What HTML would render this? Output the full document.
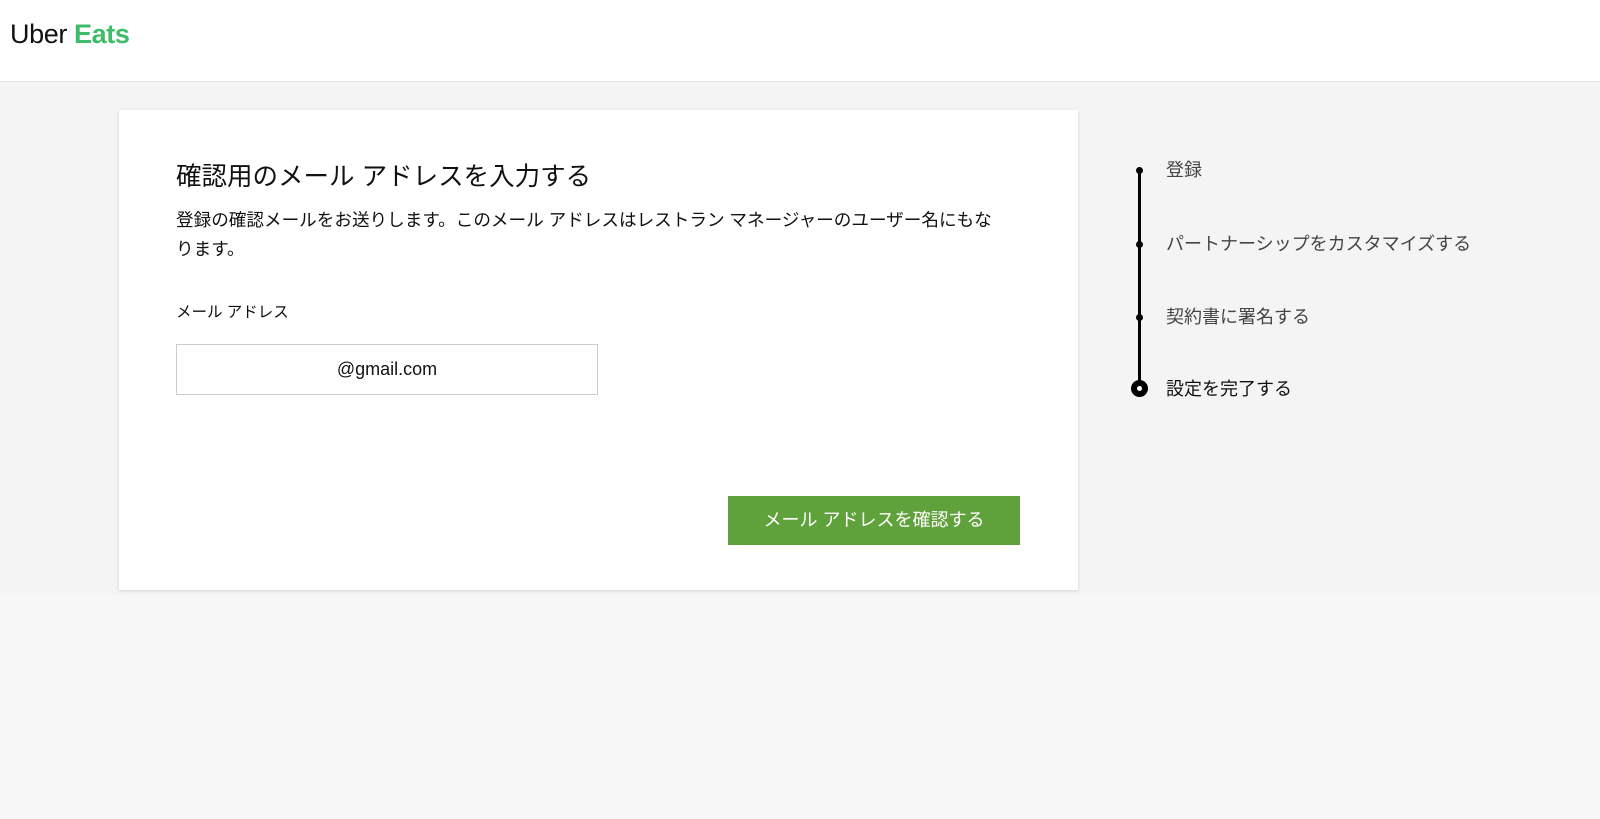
<!DOCTYPE html>
<html><head><meta charset="utf-8"><style>
*{margin:0;padding:0;box-sizing:border-box}
body{width:1600px;height:819px;background:#f7f7f7;font-family:"Liberation Sans","Noto Sans CJK JP",sans-serif;position:relative;overflow:hidden;color:#111}
.hdr{position:absolute;left:0;top:0;width:1600px;height:82px;background:#fff;border-bottom:1px solid #e2e2e2}
.logo{position:absolute;left:10px;top:18px;font-size:27px;line-height:32px;letter-spacing:-0.4px}
.band{position:absolute;left:0;top:82px;width:1600px;height:513px;background:#f4f4f4}
.card{position:absolute;left:119px;top:110px;width:959px;height:480px;background:#fff;box-shadow:0 1px 3px rgba(0,0,0,.15)}
.t{position:absolute;white-space:nowrap}
.inp{position:absolute;left:57px;top:234px;width:422px;height:51px;border:1px solid #ccc;text-align:center;line-height:49px;font-size:18px}
.btn{position:absolute;left:609px;top:386px;width:292px;height:49px;background:#5fa13a;color:#fff;text-align:center;line-height:49px;font-size:18px}
.line{position:absolute;left:1138px;top:170px;width:3px;height:218px;background:#000}
.dot{position:absolute;left:1136px;width:7px;height:7px;border-radius:50%;background:#000}
.s{position:absolute;left:1166px;font-size:18px;line-height:26px;color:#444;white-space:nowrap}
</style></head><body>
<div class="hdr"><div class="logo"><span style="color:#111">Uber</span> <span style="color:#3fbc6a;font-weight:bold">Eats</span></div></div>
<div class="band"></div>
<div class="card">
<div class="t" style="left:57px;top:50px;font-size:25.5px;line-height:34px">確認用のメール アドレスを入力する</div>
<div class="t" style="left:57px;top:96px;font-size:17.6px;line-height:29px;white-space:normal;width:832px">登録の確認メールをお送りします。このメール アドレスはレストラン マネージャーのユーザー名にもなります。</div>
<div class="t" style="left:57px;top:192px;font-size:15.5px;line-height:22px">メール アドレス</div>
<div class="inp">@gmail.com</div>
<div class="btn">メール アドレスを確認する</div>
</div>
<div class="line"></div>
<div class="dot" style="top:167px"></div>
<div class="dot" style="top:241px"></div>
<div class="dot" style="top:314px"></div>
<div style="position:absolute;left:1131px;top:380px;width:17px;height:17px;border-radius:50%;background:#000"><div style="position:absolute;left:6px;top:6px;width:5px;height:5px;border-radius:50%;background:#fff"></div></div>
<div class="s" style="top:157px">登録</div>
<div class="s" style="top:231px">パートナーシップをカスタマイズする</div>
<div class="s" style="top:304px">契約書に署名する</div>
<div class="s" style="top:376px;color:#111">設定を完了する</div>
</body></html>
